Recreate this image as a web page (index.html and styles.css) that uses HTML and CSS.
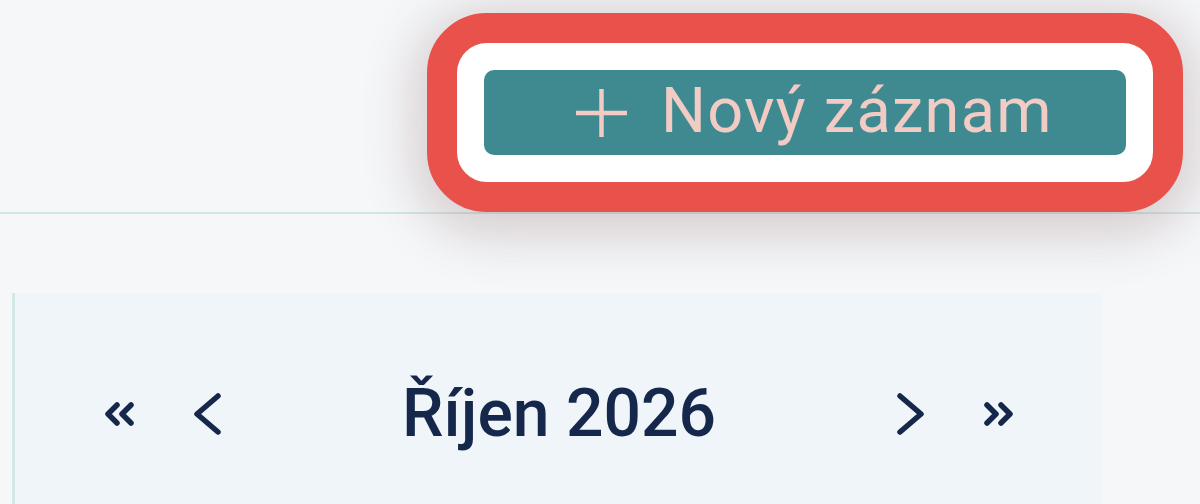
FILE: index.html
```html
<!DOCTYPE html>
<html lang="cs">
<head>
<meta charset="utf-8">
<title>Kalendář</title>
<link rel="stylesheet" href="styles.css">
</head>
<body>
<div class="page">
  <header class="topbar">
    <div class="highlight">
      <button class="btn-new" type="button">
        <svg class="plus" width="53" height="50" viewBox="0 0 53 50" aria-hidden="true">
          <line x1="26.5" y1="1" x2="26.5" y2="49" />
          <line x1="1" y1="25" x2="52" y2="25" />
        </svg>
        <span class="btn-label">Nový záznam</span>
      </button>
    </div>
  </header>
  <section class="panel">
    <div class="nav">
      <div class="nav-group">
        <svg class="dbl" width="32" height="24" viewBox="0 0 32 24" aria-hidden="true">
          <polyline points="13,3 4,12 13,21" />
          <polyline points="27,3 18,12 27,21" />
        </svg>
        <svg class="chev" width="30" height="42" viewBox="0 0 30 42" aria-hidden="true">
          <polyline points="26,3 5,21 26,39" />
        </svg>
      </div>
      <h2 class="month">Říjen 2026</h2>
      <div class="nav-group">
        <svg class="chev" width="30" height="42" viewBox="0 0 30 42" aria-hidden="true">
          <polyline points="4,3 25,21 4,39" />
        </svg>
        <svg class="dbl" width="32" height="24" viewBox="0 0 32 24" aria-hidden="true">
          <polyline points="5,3 14,12 5,21" />
          <polyline points="19,3 28,12 19,21" />
        </svg>
      </div>
    </div>
  </section>
</div>
</body>
</html>
```
FILE: styles.css
```css
html, body {
  margin: 0;
  padding: 0;
}
body {
  width: 1200px;
  height: 504px;
  overflow: hidden;
  background: #f5f7f9;
  font-family: Roboto, "Liberation Sans", Arial, sans-serif;
}
.page {
  display: flex;
  flex-direction: column;
  height: 504px;
}
.topbar {
  box-sizing: border-box;
  height: 214px;
  border-bottom: 2px solid #d2e7e5;
  display: flex;
  justify-content: flex-end;
  align-items: flex-start;
  padding: 13px 17px 0 0;
}
.highlight {
  box-sizing: border-box;
  width: 756px;
  height: 199px;
  border: 30px solid #e9524a;
  border-radius: 60px;
  background: #ffffff;
  padding: 27px;
  box-shadow: 0 10px 50px 14px rgba(120, 80, 80, 0.24);
  position: relative;
  z-index: 1;
}
.btn-new {
  box-sizing: border-box;
  width: 642px;
  height: 85px;
  border: 0;
  margin: 0;
  border-radius: 10px;
  background: #3f8a90;
  color: #f1cbc4;
  display: flex;
  align-items: center;
  gap: 33px;
  padding: 0 0 0 91px;
  font-family: Roboto, "Liberation Sans", Arial, sans-serif;
  font-size: 63px;
  font-weight: 400;
  line-height: 1;
  letter-spacing: 1.3px;
}
.plus line {
  stroke: #f1cbc4;
  stroke-width: 4.5;
}
.btn-label {
  display: block;
  margin-top: -5px;
}
.panel {
  margin: 79px 0 0 12px;
  width: 1090px;
  flex: 1;
  box-sizing: border-box;
  border-left: 3px solid #d4e9e7;
  background: #f0f5f9;
  padding-top: 97px;
}
.nav {
  display: flex;
  align-items: center;
  justify-content: space-between;
  padding: 0 88px 0 89px;
  height: 48px;
}
.nav-group {
  display: flex;
  align-items: center;
  gap: 56px;
}
.chev polyline,
.dbl polyline {
  fill: none;
  stroke: #15284b;
  stroke-linecap: round;
  stroke-linejoin: round;
}
.chev polyline {
  stroke-width: 5.5;
}
.dbl polyline {
  stroke-width: 5.5;
}
.month {
  margin: 0;
  font-size: 66px;
  font-weight: 500;
  color: #15284b;
  line-height: 1;
  letter-spacing: 0;
}
```
